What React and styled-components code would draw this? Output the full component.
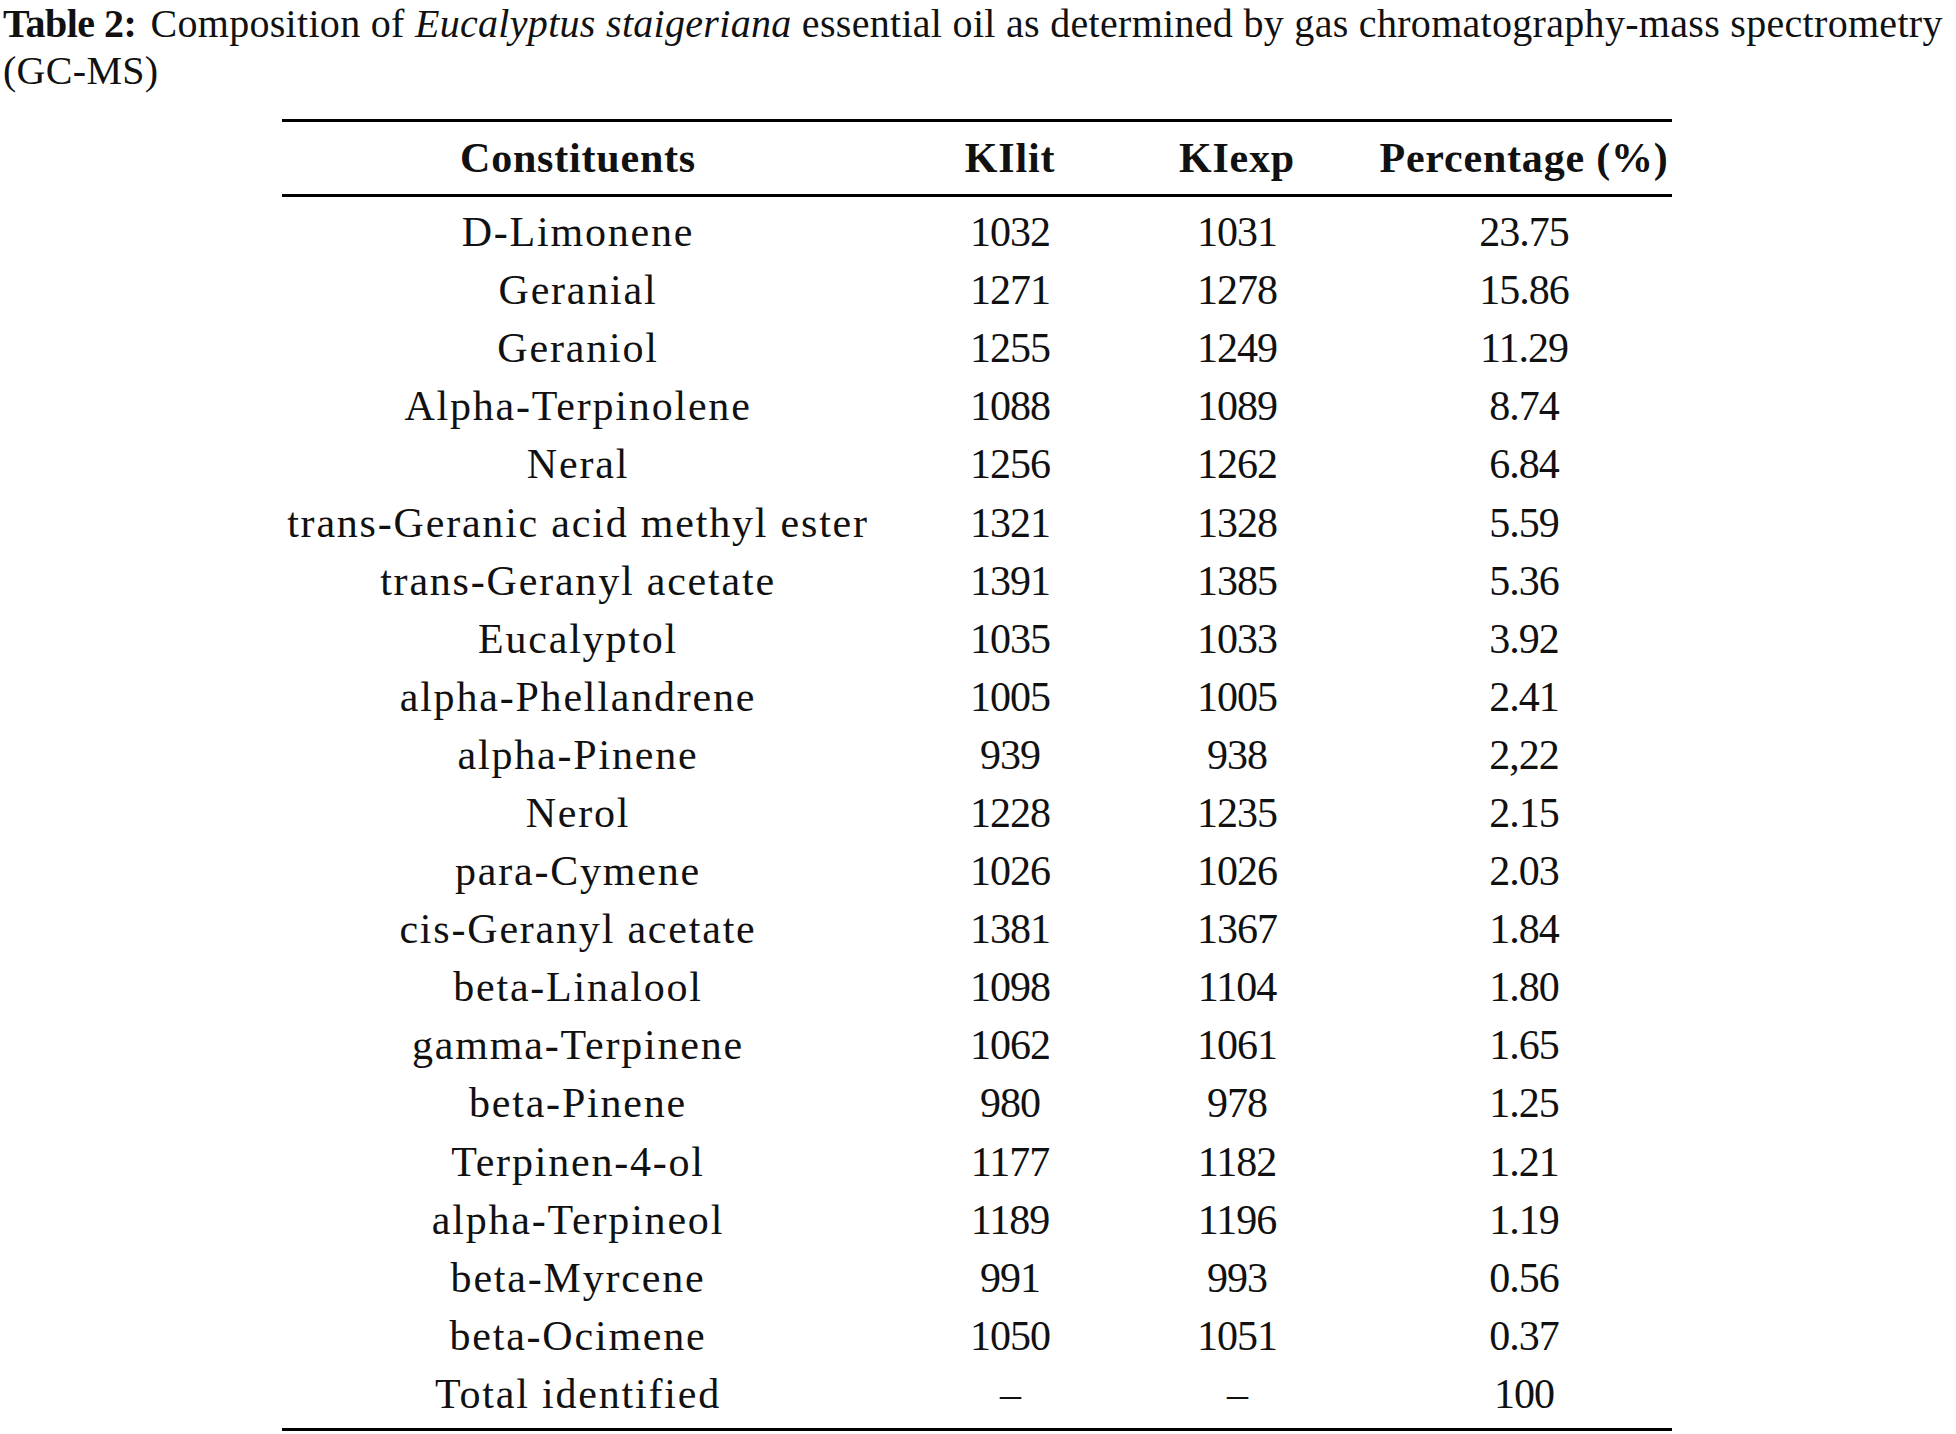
import styled, { createGlobalStyle } from "styled-components";

const GlobalStyle = createGlobalStyle`
  html, body {
    margin: 0;
    padding: 0;
    background: #fff;
  }
  body {
    font-family: "Liberation Serif", "Times New Roman", serif;
    color: #111;
    overflow: hidden;
  }
`;

const Page = styled.div`
  width: 1956px;
  height: 1434px;
  padding-left: 3px;
  box-sizing: border-box;
`;

const Caption = styled.p`
  margin: 0;
  font-size: 40px;
  line-height: 47px;
  letter-spacing: 0.3px;
`;

const Label = styled.b`
  margin-right: 14px;
  letter-spacing: -0.5px;
`;

const Table = styled.div`
  width: 1390px;
  margin: 25px 0 0 279px;
  border-top: 3px solid #000;
  border-bottom: 3px solid #000;
`;

const Row = styled.div`
  display: grid;
  grid-template-columns: 592px 272px 182px 344px;
  height: ${(p) => (p.$head ? "72px" : "58.1px")};
  align-items: center;
  font-size: 42px;
  font-weight: ${(p) => (p.$head ? 700 : 400)};
  border-bottom: ${(p) => (p.$head ? "3px solid #000" : "none")};
`;

const Body = styled.div`
  padding: 6px 0 5px;
`;

const Cell = styled.div`
  text-align: center;
  white-space: nowrap;
  letter-spacing: ${(p) => (p.$num ? "-1px" : p.$head ? "0.8px" : "1.8px")};
  padding-left: ${(p) => (p.$last ? "48px" : "0")};
`;

const rows = [
  ["D-Limonene", "1032", "1031", "23.75"],
  ["Geranial", "1271", "1278", "15.86"],
  ["Geraniol", "1255", "1249", "11.29"],
  ["Alpha-Terpinolene", "1088", "1089", "8.74"],
  ["Neral", "1256", "1262", "6.84"],
  ["trans-Geranic acid methyl ester", "1321", "1328", "5.59"],
  ["trans-Geranyl acetate", "1391", "1385", "5.36"],
  ["Eucalyptol", "1035", "1033", "3.92"],
  ["alpha-Phellandrene", "1005", "1005", "2.41"],
  ["alpha-Pinene", "939", "938", "2,22"],
  ["Nerol", "1228", "1235", "2.15"],
  ["para-Cymene", "1026", "1026", "2.03"],
  ["cis-Geranyl acetate", "1381", "1367", "1.84"],
  ["beta-Linalool", "1098", "1104", "1.80"],
  ["gamma-Terpinene", "1062", "1061", "1.65"],
  ["beta-Pinene", "980", "978", "1.25"],
  ["Terpinen-4-ol", "1177", "1182", "1.21"],
  ["alpha-Terpineol", "1189", "1196", "1.19"],
  ["beta-Myrcene", "991", "993", "0.56"],
  ["beta-Ocimene", "1050", "1051", "0.37"],
  ["Total identified", "–", "–", "100"],
];

export default function App() {
  return (
    <Page>
      <GlobalStyle />
      <Caption>
        <Label>Table 2:</Label>
        Composition of <i>Eucalyptus staigeriana</i> essential oil as determined by gas
        chromatography-mass spectrometry (GC-MS)
      </Caption>
      <Table>
        <Row $head>
          <Cell $head>Constituents</Cell>
          <Cell $head>KIlit</Cell>
          <Cell $head>KIexp</Cell>
          <Cell $head $last>Percentage (%)</Cell>
        </Row>
        <Body>
          {rows.map((r, i) => (
            <Row key={i}>
              <Cell>{r[0]}</Cell>
              <Cell $num>{r[1]}</Cell>
              <Cell $num>{r[2]}</Cell>
              <Cell $num $last>{r[3]}</Cell>
            </Row>
          ))}
        </Body>
      </Table>
    </Page>
  );
}
